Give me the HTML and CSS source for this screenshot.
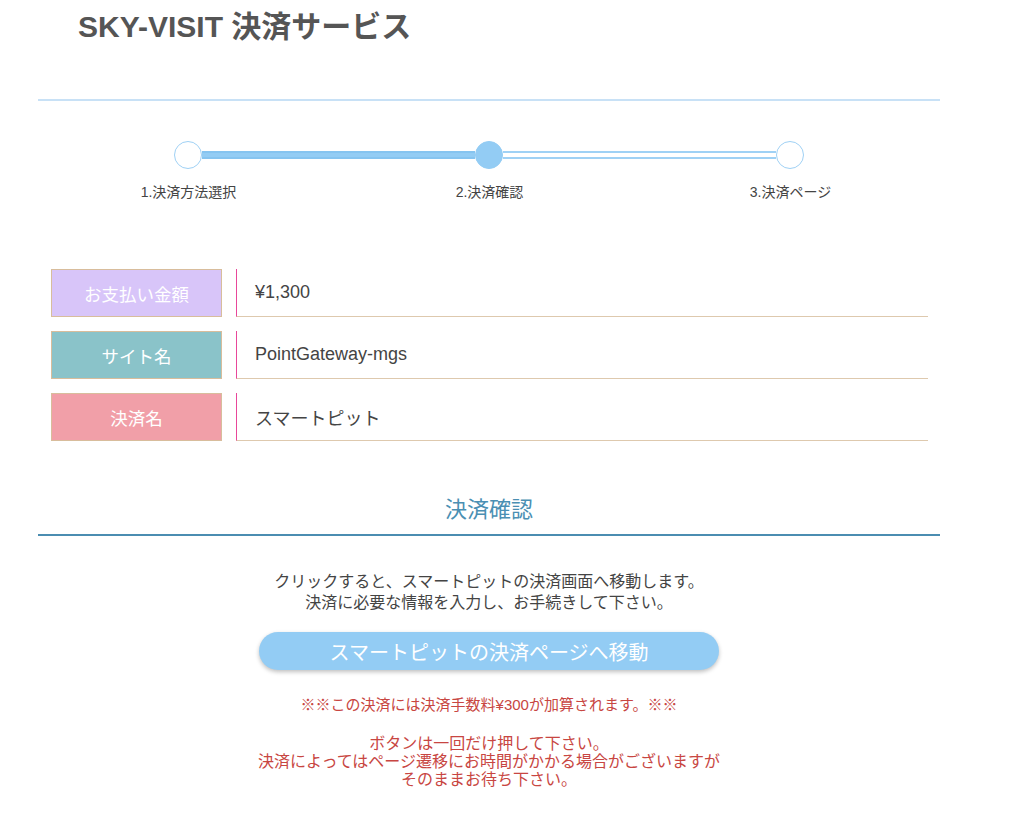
FILE: index.html
```html
<!DOCTYPE html>
<html lang="ja">
<head>
  <meta charset="UTF-8" />
  <title>SKY-VISIT 決済サービス</title>
  <meta name="viewport" content="width=device-width, initial-scale=1.0" />
  <link rel="stylesheet" href="styles.css">
</head>
<body>
  <div class="page">
    <h1 class="site-title">SKY-VISIT 決済サービス</h1>
    <hr class="top-rule" />

    <div class="steps">
      <span class="dot"></span>
      <span class="bar done"></span>
      <span class="dot active"></span>
      <span class="bar"></span>
      <span class="dot"></span>
    </div>
    <div class="step-labels">
      <span>1.決済方法選択</span>
      <span>2.決済確認</span>
      <span>3.決済ページ</span>
    </div>

    <div class="info">
      <div class="info-row">
        <div class="info-label purple">お支払い金額</div>
        <div class="info-value">¥1,300</div>
      </div>
      <div class="info-row">
        <div class="info-label teal">サイト名</div>
        <div class="info-value">PointGateway-mgs</div>
      </div>
      <div class="info-row">
        <div class="info-label pink">決済名</div>
        <div class="info-value">スマートピット</div>
      </div>
    </div>

    <h2 class="section-title">決済確認</h2>

    <p class="lead">
      クリックすると、スマートピットの決済画面へ移動します。<br>
      決済に必要な情報を入力し、お手続きして下さい。
    </p>

    <div class="btn-wrap">
      <button class="btn">スマートピットの決済ページへ移動</button>
    </div>

    <p class="fee">※※この決済には決済手数料¥300が加算されます。※※</p>
    <p class="notice">
      ボタンは一回だけ押して下さい。<br>
      決済によってはページ遷移にお時間がかかる場合がございますが<br>
      そのままお待ち下さい。
    </p>
  </div>
</body>
</html>
```

FILE: styles.css
```css
body {
  margin: 0;
  font-family: 'Liberation Sans', 'Noto Sans CJK JP', sans-serif;
  color: #444;
  background: #fff;
}
.page {
  width: 902px;
  margin-left: 38px;
}
.site-title {
  margin: 0;
  padding: 10px 0 0 40px;
  font-size: 30px;
  line-height: 34px;
  font-weight: bold;
  color: #555;
}
.top-rule {
  margin: 55px 0 0;
  border: none;
  border-top: 2px solid #c8e1f6;
}

/* progress */
.steps {
  display: flex;
  align-items: center;
  width: 630px;
  margin: 40px 0 0 136px;
}
.dot {
  width: 28px;
  height: 28px;
  box-sizing: border-box;
  border: 1.5px solid #9fd1f5;
  border-radius: 50%;
  background: #fff;
  flex: none;
}
.dot.active {
  background: #93ccf4;
  border-color: #93ccf4;
}
.bar {
  flex: 1;
  height: 8px;
  box-sizing: border-box;
  border-top: 2px solid #9fd1f5;
  border-bottom: 2px solid #9fd1f5;
  background: #fff;
}
.bar.done {
  background: #93ccf4;
  border-color: #86c4f0;
}
.step-labels {
  display: grid;
  grid-template-columns: repeat(3, 301px);
  margin-top: 13px;
  font-size: 14px;
  line-height: 20px;
  text-align: center;
  color: #444;
}

/* info table */
.info {
  margin-top: 67px;
  display: flex;
  flex-direction: column;
  gap: 14px;
}
.info-row {
  display: flex;
  height: 48px;
}
.info-label {
  width: 171px;
  margin-left: 13px;
  box-sizing: border-box;
  border: 1.5px solid #d8bd9c;
  color: #fff;
  font-size: 17.5px;
  display: flex;
  align-items: center;
  justify-content: center;
}
.purple { background: #d8c5f9; }
.teal { background: #8ac3c9; }
.pink { background: #f19fa8; }
.info-value {
  width: 692px;
  margin-left: 14px;
  box-sizing: border-box;
  border-left: 1.5px solid #e8479a;
  border-bottom: 1.5px solid #dec9ae;
  padding-left: 18px;
  font-size: 18px;
  color: #444;
  display: flex;
  align-items: center;
}

/* confirm */
.section-title {
  margin: 54px 0 0;
  padding-bottom: 9px;
  border-bottom: 2px solid #4b8db1;
  font-size: 22px;
  line-height: 30px;
  font-weight: normal;
  text-align: center;
  color: #4a8fb3;
}
.lead {
  margin: 35px 0 0;
  font-size: 16px;
  line-height: 21px;
  text-align: center;
  color: #444;
}
.btn-wrap {
  margin-top: 19px;
  text-align: center;
}
.btn {
  width: 460px;
  height: 38px;
  border: none;
  border-radius: 19px;
  background: #93ccf4;
  color: #fff;
  font-family: inherit;
  font-size: 20px;
  box-shadow: 0 2px 4px rgba(0, 0, 0, 0.25);
  cursor: pointer;
}
.fee {
  margin: 25px 0 0;
  font-size: 15px;
  line-height: 20px;
  text-align: center;
  color: #c84642;
}
.notice {
  margin: 20px 0 0;
  font-size: 16px;
  line-height: 18px;
  text-align: center;
  color: #c84642;
}
```
